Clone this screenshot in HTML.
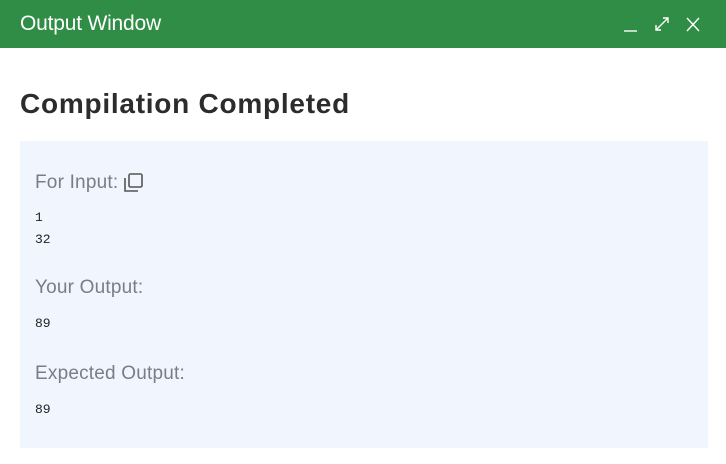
<!DOCTYPE html>
<html><head><style>
body{margin:0;width:726px;height:464px;background:#fff;font-family:"Liberation Sans",sans-serif;overflow:hidden;position:relative}
.hd{position:absolute;left:0;top:0;width:726px;height:48px;background:#308d46;color:#fff}
.hd .t{position:absolute;left:20px;top:12px;font-size:21px;letter-spacing:-0.2px}
h1{position:absolute;left:20px;top:88px;margin:0;font-size:28px;font-weight:bold;color:#2c2c2c;letter-spacing:0.75px}
.box{position:absolute;left:20px;top:141px;width:688px;height:307px;background:#f1f5fd}
.l{position:absolute;left:15px;font-size:19px;color:#7a7d85;letter-spacing:0.2px}
.c{position:absolute;left:15px;font-family:"Liberation Mono",monospace;font-size:13px;color:#222;line-height:22px}
</style></head><body>
<div class="hd"><div class="t">Output Window</div>
<svg style="position:absolute;left:620px;top:14px" width="90" height="22" viewBox="0 0 90 22" fill="none" stroke="#fff" stroke-width="1.4">
<line x1="4" y1="17" x2="17" y2="17"/>
<path d="M36 16L48 4M43 4H48V9M36 11V16H41"/>
<path d="M67 4L79 17M79 4L67 17"/>
</svg></div>
<h1>Compilation Completed</h1>
<div class="box">
<div class="l" style="top:31px">For Input:</div>
<svg style="position:absolute;left:102px;top:31px" width="22" height="22" viewBox="0 0 22 22" fill="none" stroke="#555" stroke-width="1.6"><rect x="7" y="2" width="13" height="13" rx="1.5"/><path d="M3 6V19H16"/></svg>
<div class="c" style="top:66px">1<br>32</div>
<div class="l" style="top:136px">Your Output:</div>
<div class="c" style="top:172px">89</div>
<div class="l" style="top:222px">Expected Output:</div>
<div class="c" style="top:258px">89</div>
</div>
</body></html>
